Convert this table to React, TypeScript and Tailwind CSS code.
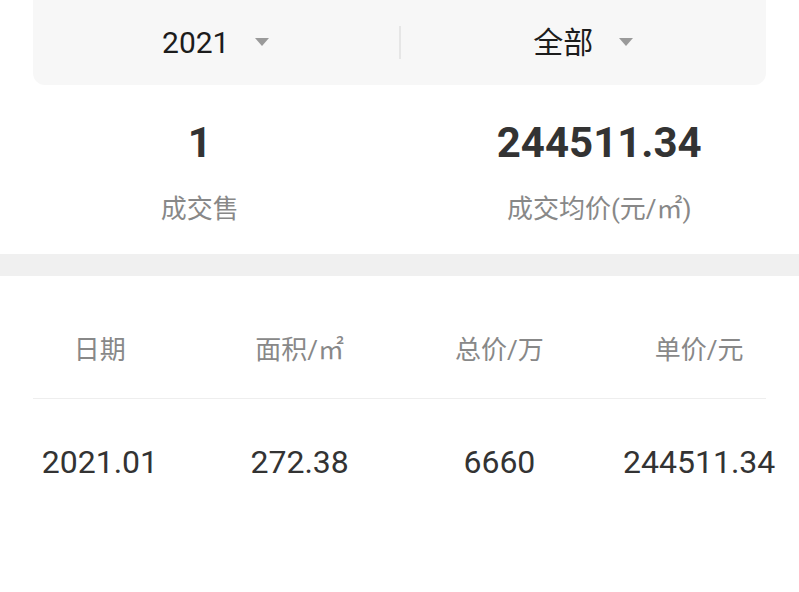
const font = "font-['Roboto','Noto_Sans_CJK_SC',sans-serif]";

function Caret() {
  return (
    <svg width="14" height="9" viewBox="0 0 14 9" className="shrink-0">
      <path d="M0 0 H14 L7 8 Z" fill="#9a9a9a" />
    </svg>
  );
}

function Picker({ label }: { label: string }) {
  return (
    <div className="flex flex-1 items-center justify-center gap-[26px]">
      <span className="text-[30px] leading-[30px] text-[#1c1c1c]">{label}</span>
      <Caret />
    </div>
  );
}

const headers = ["日期", "面积/㎡", "总价/万", "单价/元"];
const rows = [["2021.01", "272.38", "6660", "244511.34"]];

export default function App() {
  return (
    <div className={`w-[799px] h-[592px] bg-white overflow-hidden ${font}`}>
      {/* filters */}
      <div className="mx-[33px] h-[85px] bg-[#f7f7f7] rounded-b-xl flex items-center">
        <Picker label="2021" />
        <div className="w-[2px] h-[33px] bg-[#e6e6e6]" />
        <Picker label="全部" />
      </div>

      {/* stats */}
      <div className="grid grid-cols-2 pt-[37px] pb-[32px]">
        <div className="flex flex-col items-center gap-[32px]">
          <span className="text-[42px] leading-[42px] font-bold text-[#333]">1</span>
          <span className="text-[26px] leading-[26px] text-[#888]">成交售</span>
        </div>
        <div className="flex flex-col items-center gap-[32px]">
          <span className="text-[42px] leading-[42px] font-bold text-[#333]">244511.34</span>
          <span className="text-[26px] leading-[26px] text-[#888]">成交均价(元/㎡)</span>
        </div>
      </div>

      <div className="h-[22px] bg-[#f0f0f0]" />

      {/* table */}
      <div className="grid grid-cols-4 pt-[61px] pb-[35px]">
        {headers.map((h) => (
          <div key={h} className="text-center text-[26px] leading-[26px] text-[#888]">
            {h}
          </div>
        ))}
      </div>
      <div className="mx-[33px] h-px bg-[#eeeeee]" />
      {rows.map((r, i) => (
        <div key={i} className="grid grid-cols-4 pt-[47px]">
          {r.map((c, j) => (
            <div key={j} className="text-center text-[32px] leading-[32px] text-[#333]">
              {c}
            </div>
          ))}
        </div>
      ))}
    </div>
  );
}
